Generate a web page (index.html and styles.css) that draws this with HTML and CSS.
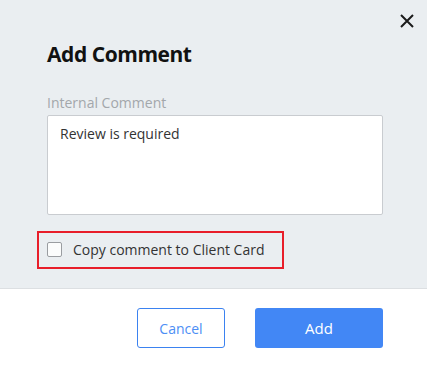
FILE: index.html
```html
<!DOCTYPE html>
<html>
<head>
<meta charset="utf-8">
<link rel="stylesheet" href="styles.css">
</head>
<body>
<div class="modal">
  <div class="modal-body">
    <button class="close" aria-label="Close">
      <svg width="14" height="14" viewBox="0 0 14 14"><path d="M1 1L13 13M13 1L1 13" stroke="#1b1b1b" stroke-width="2" fill="none"/></svg>
    </button>
    <h1 class="title">Add Comment</h1>
    <div class="field-label">Internal Comment</div>
    <div class="textarea">Review is required</div>
    <label class="copy">
      <span class="checkbox"></span>
      <span class="copy-text">Copy comment to Client Card</span>
    </label>
  </div>
  <div class="modal-footer">
    <button class="btn btn-cancel">Cancel</button>
    <button class="btn btn-add">Add</button>
  </div>
</div>
</body>
</html>
```
FILE: styles.css
```css
html, body {
  margin: 0;
  padding: 0;
  background: #ffffff;
}
body {
  font-family: "Open Sans", "Noto Sans", sans-serif;
  color: #333;
}
.modal {
  width: 427px;
  height: 367px;
  display: flex;
  flex-direction: column;
}
.modal-body {
  position: relative;
  height: 289px;
  box-sizing: border-box;
  background: #eaeef1;
  border-bottom: 1px solid #dcdfe2;
  padding: 39px 44px 0 47px;
  display: flex;
  flex-direction: column;
  align-items: flex-start;
}
.close {
  position: absolute;
  top: 14px;
  right: 13px;
  width: 14px;
  height: 14px;
  padding: 0;
  border: 0;
  background: transparent;
  display: block;
}
.close svg { display: block; }
.title {
  margin: 0;
  font-size: 21px;
  line-height: 30px;
  font-weight: 700;
  letter-spacing: -0.45px;
  color: #111;
}
.field-label {
  margin-top: 24px;
  font-size: 14px;
  line-height: 20px;
  color: #a3a7ab;
}
.textarea {
  margin-top: 2px;
  box-sizing: border-box;
  width: 336px;
  height: 100px;
  background: #fff;
  border: 1px solid #c9ccd0;
  border-radius: 2px;
  padding: 8px 12px;
  font-size: 14px;
  line-height: 20px;
  color: #333;
}
.copy {
  margin-top: 16px;
  margin-left: -10px;
  box-sizing: border-box;
  width: 247px;
  height: 38px;
  border: 2px solid #e81e2a;
  padding: 0 0 1px 8px;
  display: flex;
  align-items: center;
  gap: 11px;
}
.checkbox {
  box-sizing: border-box;
  width: 15px;
  height: 15px;
  border: 1px solid #9a9da1;
  border-radius: 2px;
  background: #fbfcfc;
}
.copy-text {
  font-size: 14px;
  line-height: 20px;
  color: #333;
}
.modal-footer {
  flex: 1;
  display: flex;
  justify-content: flex-end;
  align-items: flex-start;
  padding: 19px 44px 0 0;
  gap: 30px;
}
.btn {
  box-sizing: border-box;
  height: 40px;
  border-radius: 3px;
  font-family: "Open Sans", "Noto Sans", sans-serif;
  font-size: 14px;
  padding: 0;
}
.btn-cancel {
  width: 88px;
  background: #fff;
  border: 1px solid #3b82f0;
  color: #4d8ef5;
}
.btn-add {
  width: 128px;
  background: #4287f5;
  border: 0;
  color: #fff;
  font-size: 15px;
}
```
